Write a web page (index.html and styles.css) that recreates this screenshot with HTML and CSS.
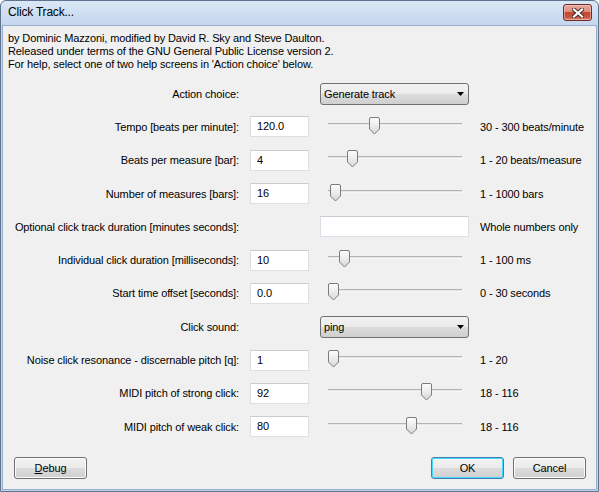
FILE: index.html
```html
<!DOCTYPE html>
<html>
<head>
<meta charset="utf-8">
<link rel="stylesheet" href="styles.css">
</head>
<body>
<div class="window">
  <div class="titlebar">
    <span class="title">Click Track...</span>
    <div class="close">
      <svg width="12" height="10" viewBox="0 0 12 10">
        <path d="M2 1.5 L10 8.5 M10 1.5 L2 8.5" stroke="#4a2a28" stroke-width="4" stroke-linecap="square"/>
        <path d="M2 1.5 L10 8.5 M10 1.5 L2 8.5" stroke="#ffffff" stroke-width="2.2" stroke-linecap="square"/>
      </svg>
    </div>
  </div>
  <div class="client">
    <div class="info">
      <p>by Dominic Mazzoni, modified by David R. Sky and Steve Daulton.</p>
      <p>Released under terms of the GNU General Public License version 2.</p>
      <p>For help, select one of two help screens in 'Action choice' below.</p>
    </div>
    <div class="form">
      <div class="lbl">Action choice:</div>
      <div class="combo c3"><span>Generate track</span><svg class="arrow" width="7" height="4" viewBox="0 0 7 4"><path d="M0 0 H7 L3.5 4 Z" fill="#000"/></svg></div>

      <div class="lbl">Tempo [beats per minute]:</div>
      <div class="textbox">120.0</div>
      <div class="slider"><div class="track"></div><svg class="thumb" style="left:49px" width="11" height="18" viewBox="0 0 11 18"><use href="#thumb"/></svg></div>
      <div class="range">30 - 300 beats/minute</div>

      <div class="lbl">Beats per measure [bar]:</div>
      <div class="textbox">4</div>
      <div class="slider"><div class="track"></div><svg class="thumb" style="left:27px" width="11" height="18" viewBox="0 0 11 18"><use href="#thumb"/></svg></div>
      <div class="range">1 - 20 beats/measure</div>

      <div class="lbl">Number of measures [bars]:</div>
      <div class="textbox">16</div>
      <div class="slider"><div class="track"></div><svg class="thumb" style="left:10px" width="11" height="18" viewBox="0 0 11 18"><use href="#thumb"/></svg></div>
      <div class="range">1 - 1000 bars</div>

      <div class="lbl">Optional click track duration [minutes seconds]:</div>
      <div class="textbox c3"></div>
      <div class="range">Whole numbers only</div>

      <div class="lbl">Individual click duration [milliseconds]:</div>
      <div class="textbox">10</div>
      <div class="slider"><div class="track"></div><svg class="thumb" style="left:19px" width="11" height="18" viewBox="0 0 11 18"><use href="#thumb"/></svg></div>
      <div class="range">1 - 100 ms</div>

      <div class="lbl">Start time offset [seconds]:</div>
      <div class="textbox">0.0</div>
      <div class="slider"><div class="track"></div><svg class="thumb" style="left:8px" width="11" height="18" viewBox="0 0 11 18"><use href="#thumb"/></svg></div>
      <div class="range">0 - 30 seconds</div>

      <div class="lbl">Click sound:</div>
      <div class="combo c3"><span>ping</span><svg class="arrow" width="7" height="4" viewBox="0 0 7 4"><path d="M0 0 H7 L3.5 4 Z" fill="#000"/></svg></div>

      <div class="lbl">Noise click resonance - discernable pitch [q]:</div>
      <div class="textbox">1</div>
      <div class="slider"><div class="track"></div><svg class="thumb" style="left:8px" width="11" height="18" viewBox="0 0 11 18"><use href="#thumb"/></svg></div>
      <div class="range">1 - 20</div>

      <div class="lbl">MIDI pitch of strong click:</div>
      <div class="textbox">92</div>
      <div class="slider"><div class="track"></div><svg class="thumb" style="left:101px" width="11" height="18" viewBox="0 0 11 18"><use href="#thumb"/></svg></div>
      <div class="range">18 - 116</div>

      <div class="lbl">MIDI pitch of weak click:</div>
      <div class="textbox">80</div>
      <div class="slider"><div class="track"></div><svg class="thumb" style="left:86px" width="11" height="18" viewBox="0 0 11 18"><use href="#thumb"/></svg></div>
      <div class="range">18 - 116</div>
    </div>
    <div class="actions">
      <div class="button"><span><u>D</u>ebug</span></div>
      <div class="group">
        <div class="button default">OK</div>
        <div class="button">Cancel</div>
      </div>
    </div>
  </div>
</div>
<svg class="defs" width="0" height="0">
  <defs>
    <linearGradient id="tg" x1="0" y1="0" x2="0" y2="1">
      <stop offset="0" stop-color="#fdfdfd"/>
      <stop offset="0.5" stop-color="#ececec"/>
      <stop offset="1" stop-color="#d6d6d6"/>
    </linearGradient>
    <path id="thumb" d="M2 0.5 H9 Q10.5 0.5 10.5 2 V12 L5.5 17 L0.5 12 V2 Q0.5 0.5 2 0.5 Z" fill="url(#tg)" stroke="#7c7c7c" stroke-width="1"/>
  </defs>
</svg>
</body>
</html>
```

FILE: styles.css
```css
html, body {
  margin: 0;
  padding: 0;
  background: #ffffff;
}

.defs {
  position: absolute;
  width: 0;
  height: 0;
}

.window {
  width: 599px;
  height: 492px;
  box-sizing: border-box;
  border: 1px solid #5d7390;
  border-radius: 6px 6px 0 0;
  background: linear-gradient(#dbe7f5 0px, #c4d7ee 24px, #c1d5ec 100%);
  display: flex;
  flex-direction: column;
  font-family: "Liberation Sans", Arial, sans-serif;
  font-size: 11px;
  letter-spacing: -0.12px;
  color: #000;
}

.titlebar {
  height: 24px;
  flex: none;
  display: flex;
  justify-content: space-between;
  align-items: flex-start;
  padding: 3px 6px 0 7px;
  box-sizing: border-box;
}

.title {
  font-size: 12px;
  letter-spacing: -0.2px;
  line-height: 17px;
  color: #000;
}

.close {
  width: 29px;
  height: 17px;
  box-sizing: border-box;
  border: 1px solid #6b2b26;
  border-radius: 3px;
  background: linear-gradient(#e9ab9b 0%, #dc8d7c 45%, #c54633 50%, #c9533f 80%, #dc8a73 100%);
  box-shadow: inset 0 0 0 1px rgba(255, 220, 210, 0.45);
  display: flex;
  align-items: center;
  justify-content: center;
}

.client {
  flex: 1;
  margin: 0 1px 1px 1px;
  border: 1px solid #98adc8;
  background: #f0f0f0;
  display: flex;
  flex-direction: column;
}

.info {
  padding: 6px 0 0 5px;
}

.info p {
  margin: 0;
  line-height: 13px;
}

.form {
  margin-top: 6px;
  display: grid;
  grid-template-columns: 236px 59px 149px 1fr;
  grid-auto-rows: 33.3px;
  column-gap: 11px;
  align-items: center;
}

.lbl {
  grid-column: 1;
  text-align: right;
  white-space: nowrap;
}

.c3 {
  grid-column: 3;
}

.textbox {
  height: 21px;
  box-sizing: border-box;
  background: #fff;
  border: 1px solid #dcdfe5;
  border-top-color: #c9ccd3;
  padding-left: 6px;
  line-height: 19px;
}

.combo {
  height: 22px;
  box-sizing: border-box;
  border: 1px solid #707070;
  border-radius: 3px;
  background: linear-gradient(#f2f2f2 0%, #ebebeb 50%, #dddddd 50%, #cfcfcf 100%);
  display: flex;
  align-items: center;
  justify-content: space-between;
  padding: 0 4px 0 3px;
}

.arrow {
  display: block;
}

.slider {
  grid-column: 3;
  position: relative;
  height: 20px;
}

.track {
  position: absolute;
  left: 8px;
  width: 134px;
  top: 6px;
  height: 3px;
  box-sizing: border-box;
  background: #e6e6e6;
  border-top: 1px solid #b3b3b3;
  border-bottom: 1px solid #f6f6f6;
}

.thumb {
  position: absolute;
  top: 0;
  display: block;
}

.range {
  grid-column: 4;
  white-space: nowrap;
}

.actions {
  margin-top: auto;
  display: flex;
  justify-content: space-between;
  padding: 0 10px 10px 11px;
}

.group {
  display: flex;
  gap: 9px;
}

.button {
  width: 73px;
  height: 22px;
  box-sizing: border-box;
  border: 1px solid #707070;
  border-radius: 3px;
  background: linear-gradient(#f2f2f2 0%, #ebebeb 50%, #dddddd 50%, #cfcfcf 100%);
  box-shadow: inset 0 0 0 1px #fcfcfc;
  display: flex;
  align-items: center;
  justify-content: center;
}

.button.default {
  border-color: #3c7fb1;
  box-shadow: inset 0 0 0 1px #48d8fb;
}
```
